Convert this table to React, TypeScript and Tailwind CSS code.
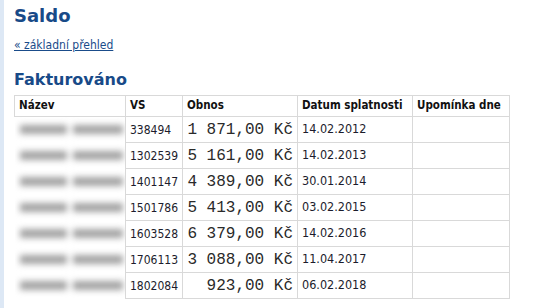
import React from "react";

type Row = {
  vs: string;
  amount: string;
  due: string;
};

const rows: Row[] = [
  { vs: "338494", amount: "1 871,00 Kč", due: "14.02.2012" },
  { vs: "1302539", amount: "5 161,00 Kč", due: "14.02.2013" },
  { vs: "1401147", amount: "4 389,00 Kč", due: "30.01.2014" },
  { vs: "1501786", amount: "5 413,00 Kč", due: "03.02.2015" },
  { vs: "1603528", amount: "6 379,00 Kč", due: "14.02.2016" },
  { vs: "1706113", amount: "3 088,00 Kč", due: "11.04.2017" },
  { vs: "1802084", amount: "923,00 Kč", due: "06.02.2018" },
];

const cell = "border border-[#d9d9d9] px-[4px]";

export default function App() {
  return (
    <div className="flex h-[308px] w-[536px] bg-white overflow-hidden">
      {/* left stripe */}
      <div className="w-[4px] shrink-0 bg-[#dde8f5]" />

      <div className="pl-[10px] pt-[5px] font-['DejaVu_Sans',sans-serif]">
        <h1 className="text-[18px] leading-[22px] font-bold text-[#184a88]">Saldo</h1>

        <a
          href="#"
          className="block mt-[10px] text-[12px] leading-[16px] text-[#1a4c8a] underline font-['DejaVu_Sans_Condensed','DejaVu_Sans',sans-serif]"
        >
          « základní přehled
        </a>

        <h2 className="mt-[17px] text-[16px] leading-[20px] font-bold text-[#184a88]">Fakturováno</h2>

        <table className="mt-[5px] w-[495px] border-collapse table-fixed text-[#1c1c2c] font-['DejaVu_Sans_Condensed','DejaVu_Sans',sans-serif]">
          <colgroup>
            <col className="w-[111px]" />
            <col className="w-[57px]" />
            <col className="w-[115px]" />
            <col className="w-[115px]" />
            <col className="w-[97px]" />
          </colgroup>
          <thead>
            <tr className="h-[21px] text-left text-[11.5px] font-bold text-[#111]">
              <th className={cell}>Název</th>
              <th className={cell}>VS</th>
              <th className={cell}>Obnos</th>
              <th className={cell}>Datum splatnosti</th>
              <th className={cell + " whitespace-nowrap"}>Upomínka dne</th>
            </tr>
          </thead>
          <tbody>
            {rows.map((r) => (
              <tr key={r.vs} className="h-[26px] text-[12px]">
                {/* name is blurred out in the original */}
                <td className="border-none p-0 overflow-hidden">
                  <div className="flex gap-[6px] pl-[5px] blur-[3px]">
                    <span className="h-[9px] w-[47px] bg-[#a3a3a3]" />
                    <span className="h-[9px] w-[50px] bg-[#a3a3a3]" />
                  </div>
                </td>
                <td className={cell}>{r.vs}</td>
                <td className={cell + " text-right whitespace-pre text-[16px] text-[#2a2a2a] font-['Liberation_Mono',monospace]"}>
                  {r.amount}
                </td>
                <td className={cell + " text-[12.5px]"}>{r.due}</td>
                <td className={cell} />
              </tr>
            ))}
          </tbody>
        </table>
      </div>
    </div>
  );
}
